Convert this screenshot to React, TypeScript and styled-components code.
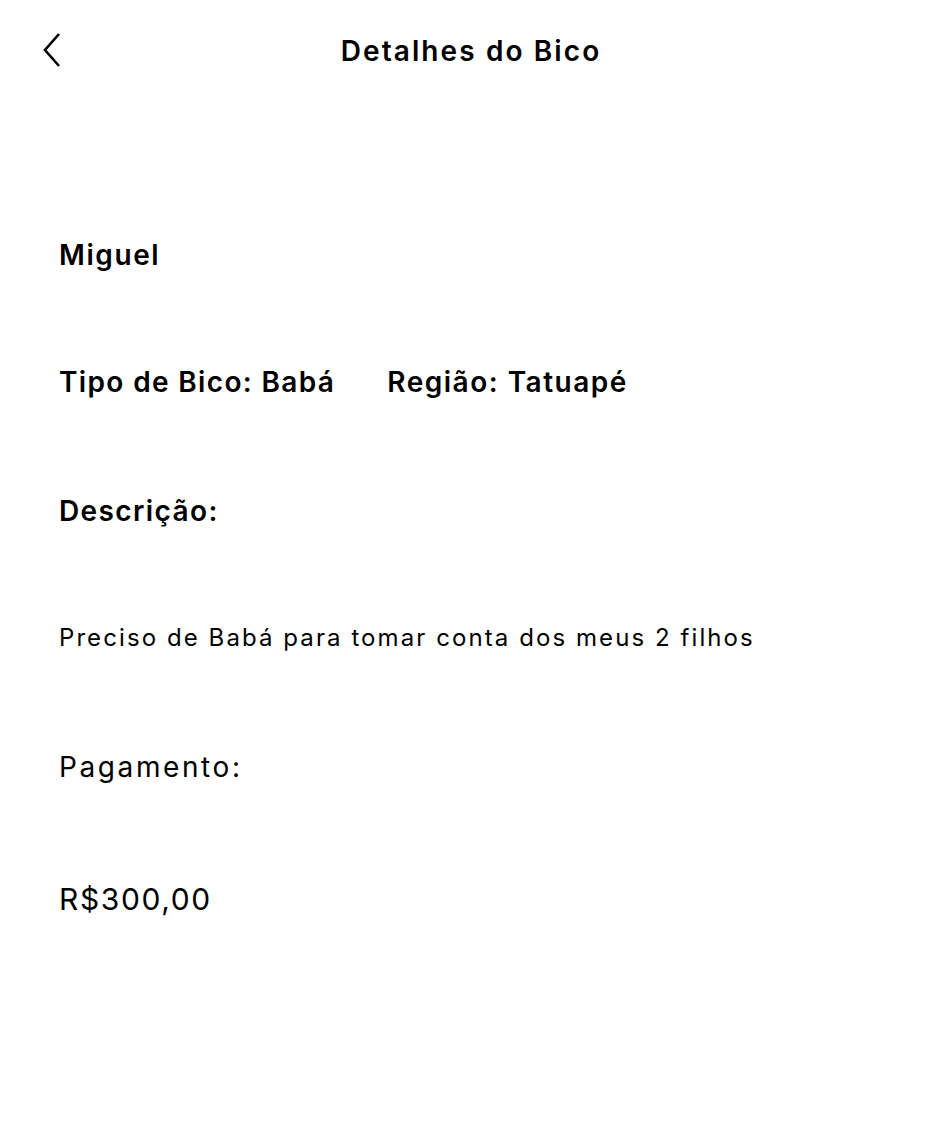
import React from "react";
import styled, { createGlobalStyle } from "styled-components";

const GlobalStyle = createGlobalStyle`
  html, body {
    margin: 0;
    padding: 0;
    background: #ffffff;
  }
  body {
    font-family: Inter, "Noto Sans", "Liberation Sans", sans-serif;
    color: #000000;
  }
`;

const Screen = styled.div`
  width: 940px;
  min-height: 1128px;
  background: #ffffff;
  display: flex;
  flex-direction: column;
`;

const Header = styled.header`
  position: relative;
  height: 102px;
  display: flex;
  align-items: center;
  justify-content: center;
`;

const BackButton = styled.button`
  position: absolute;
  left: 36px;
  top: 30px;
  width: 32px;
  height: 40px;
  padding: 0;
  border: none;
  background: transparent;
  display: flex;
  align-items: center;
  justify-content: center;
  cursor: pointer;
`;

const Title = styled.h1`
  margin: 0 0 0 2px;
  font-size: 28px;
  font-weight: 600;
  line-height: 34px;
  letter-spacing: 2.1px;
`;

const Content = styled.main`
  display: flex;
  flex-direction: column;
  padding: 136px 59px 0;
`;

const Row = styled.div<{ $top: number }>`
  display: flex;
  align-items: center;
  gap: 52px;
  height: 36px;
  margin-top: ${(p) => p.$top}px;
`;

const Label = styled.span<{ $size: number; $weight: number; $spacing: number }>`
  font-size: ${(p) => p.$size}px;
  font-weight: ${(p) => p.$weight};
  letter-spacing: ${(p) => p.$spacing}px;
  line-height: 1.2;
  white-space: nowrap;
`;

const ChevronLeft = () => (
  <svg width="24" height="36" viewBox="0 0 24 36" fill="none">
    <path d="M19 2 L5 18 L19 34" stroke="#000" strokeWidth="2.6" strokeLinecap="butt" strokeLinejoin="miter" />
  </svg>
);

export default function App() {
  return (
    <>
      <GlobalStyle />
      <Screen>
        <Header>
          <BackButton aria-label="Voltar">
            <ChevronLeft />
          </BackButton>
          <Title>Detalhes do Bico</Title>
        </Header>
        <Content>
          <Row $top={0}>
            <Label $size={28} $weight={600} $spacing={1.6}>Miguel</Label>
          </Row>
          <Row $top={91}>
            <Label $size={28} $weight={600} $spacing={1.35}>Tipo de Bico: Babá</Label>
            <Label $size={28} $weight={600} $spacing={1.5}>Região: Tatuapé</Label>
          </Row>
          <Row $top={93}>
            <Label $size={28} $weight={600} $spacing={1.4}>Descrição:</Label>
          </Row>
          <Row $top={90}>
            <Label $size={24} $weight={400} $spacing={2.08}>Preciso de Babá para tomar conta dos meus 2 filhos</Label>
          </Row>
          <Row $top={94}>
            <Label $size={28} $weight={400} $spacing={2.6}>Pagamento:</Label>
          </Row>
          <Row $top={95}>
            <Label $size={30} $weight={400} $spacing={1.6}>R$300,00</Label>
          </Row>
        </Content>
      </Screen>
    </>
  );
}
